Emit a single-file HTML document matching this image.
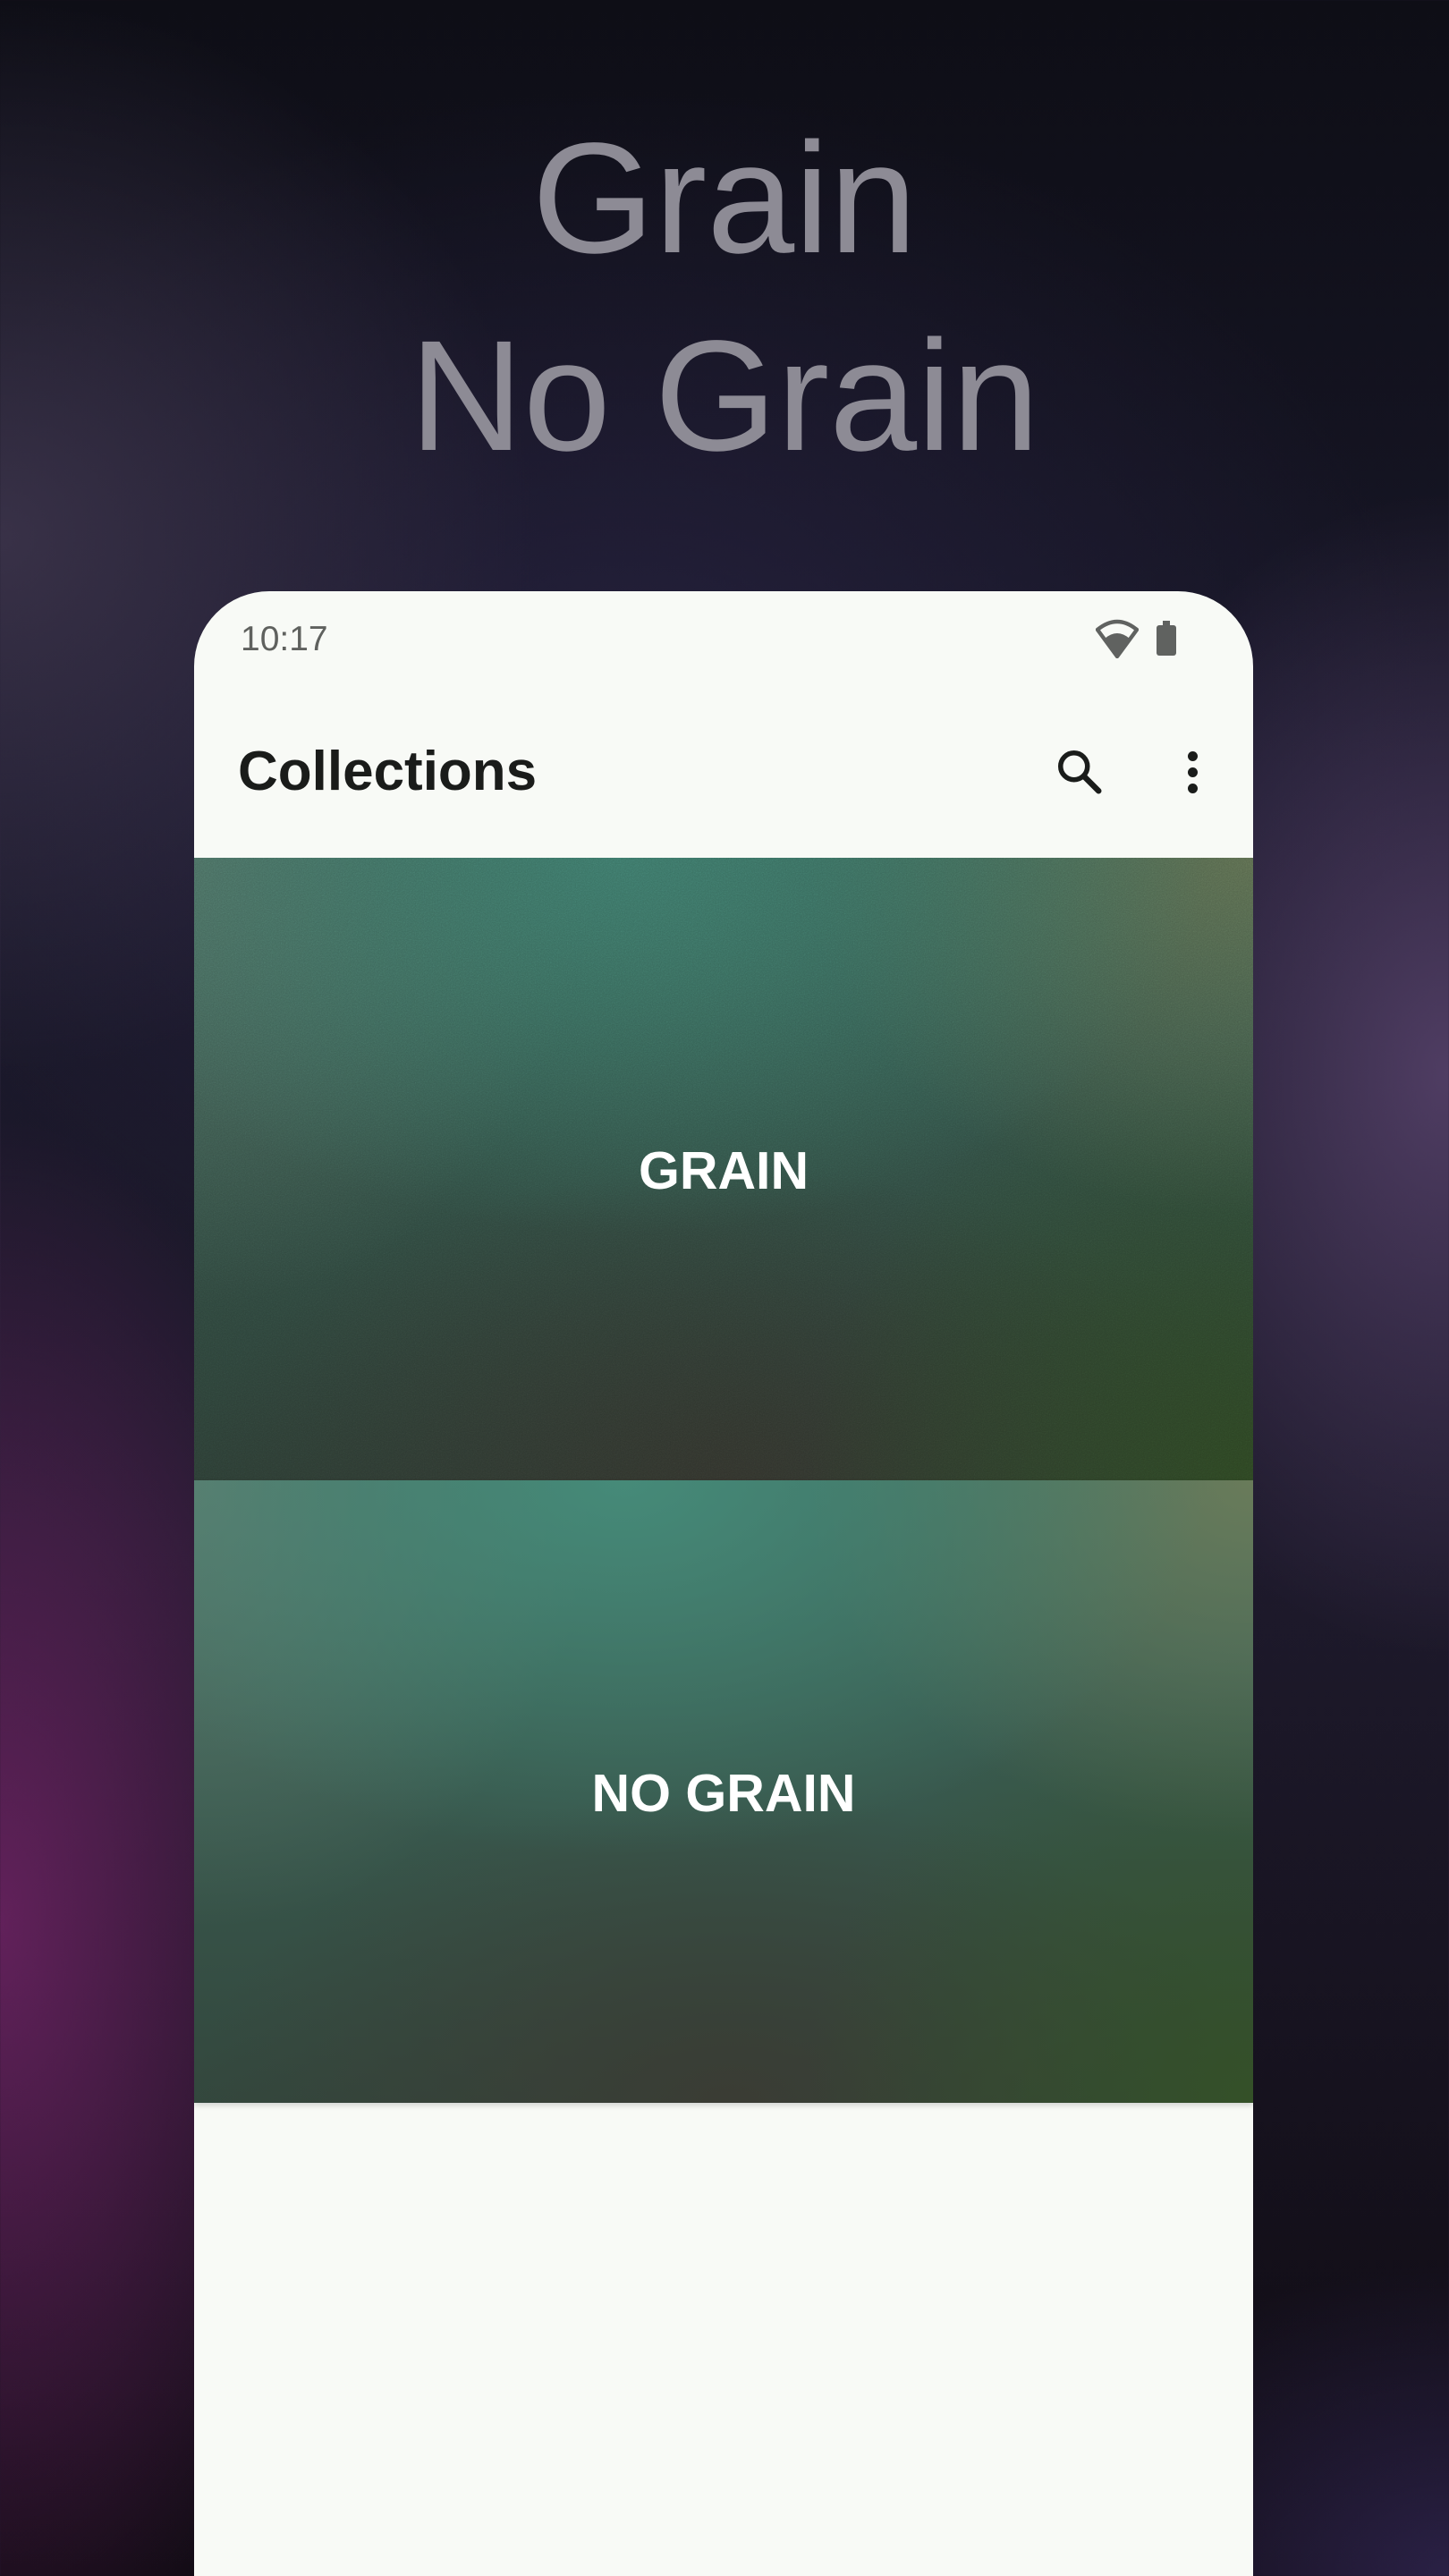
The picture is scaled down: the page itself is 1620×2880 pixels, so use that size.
<!DOCTYPE html>
<html><head><meta charset="utf-8"><style>
*{margin:0;padding:0;box-sizing:border-box}
html,body{width:1620px;height:2880px;overflow:hidden}
body{position:relative;font-family:"Liberation Sans",sans-serif;
background:
radial-gradient(ellipse 420px 900px at 0px 2150px,rgba(110,35,100,.85),rgba(110,35,100,0) 100%),
radial-gradient(ellipse 450px 650px at 1620px 1200px,rgba(85,65,105,.9),rgba(85,65,105,0) 100%),
radial-gradient(ellipse 600px 600px at 0px 600px,rgba(60,52,75,.9),rgba(60,52,75,0) 100%),
radial-gradient(ellipse 450px 350px at 1620px 2880px,rgba(45,35,75,.9),rgba(45,35,75,0) 100%),
radial-gradient(ellipse 900px 700px at 700px 800px,rgba(40,35,65,.8),rgba(40,35,65,0) 100%),
linear-gradient(180deg,#0e0e16 0%,#181728 30%,#1e1a2c 60%,#0f0b12 100%);}
.h{position:absolute;left:0;width:1620px;text-align:center;color:#8d8b95;font-size:176px;line-height:1}
.phone{position:absolute;left:217px;top:661px;width:1184px;height:2300px;background:#f8faf6;border-radius:84px 84px 0 0;overflow:hidden}
.time{position:absolute;left:52px;top:32px;font-size:39px;color:#5f615e}
.title{position:absolute;left:49px;top:166px;font-size:62px;font-weight:bold;color:#1a1c1a}
.card{position:absolute;left:0;width:1184px;height:696px;overflow:hidden}
.lbl{position:absolute;left:0;width:100%;text-align:center;color:#fff;font-weight:bold;font-size:59px;line-height:1}
.g{background:
radial-gradient(ellipse 650px 420px at 480px 0px,rgba(70,140,122,.95),rgba(70,140,122,0)),
radial-gradient(ellipse 500px 400px at 1184px 0px,rgba(110,125,90,.9),rgba(110,125,90,0)),
radial-gradient(ellipse 450px 500px at 0px 0px,rgba(95,125,112,.9),rgba(95,125,112,0)),
radial-gradient(ellipse 500px 500px at 1184px 696px,rgba(52,80,40,1),rgba(52,80,40,0)),
radial-gradient(ellipse 600px 350px at 600px 696px,rgba(58,60,52,1),rgba(58,60,52,0)),
linear-gradient(180deg,#3e6a5e,#33473d);}
</style></head><body>
<div class="h" style="top:134px">Grain</div>
<div class="h" style="top:355px">No Grain</div>
<div class="phone">
<div class="time">10:17</div>
<svg style="position:absolute;left:1008px;top:31px" width="48" height="44" viewBox="0 0 24 22"><path d="M12 21 L1 6 Q12 -3 23 6 Z" fill="none" stroke="#606260" stroke-width="2.2" stroke-linejoin="round"/><path d="M12 21 L5 11 Q12 5 19 11 Z" fill="#606260"/></svg>
<div style="position:absolute;left:1076px;top:38px;width:22px;height:34px;background:#606260;border-radius:3px"></div>
<div style="position:absolute;left:1083px;top:33px;width:8px;height:6px;background:#606260"></div>
<div class="title">Collections</div>
<svg style="position:absolute;left:960px;top:172px" width="60" height="60" viewBox="0 0 24 24"><circle cx="9.5" cy="9.5" r="6" fill="none" stroke="#1a1c1a" stroke-width="2.2"/><path d="M14 14 L20.5 20.5" stroke="#1a1c1a" stroke-width="2.6" stroke-linecap="round"/></svg>
<div style="position:absolute;left:1111px;top:179px;width:11px;height:11px;border-radius:50%;background:#1a1c1a;box-shadow:0 18px 0 #1a1c1a,0 36px 0 #1a1c1a"></div>
<div class="card" style="top:298px">
<div class="card g" style="top:0;filter:brightness(.85)">
<svg width="1184" height="696" style="position:absolute;left:0;top:0;opacity:.35;mix-blend-mode:overlay"><filter id="n"><feTurbulence type="fractalNoise" baseFrequency="0.8" numOctaves="2" stitchTiles="stitch"/><feColorMatrix type="saturate" values="0"/></filter><rect width="1184" height="696" filter="url(#n)"/></svg>
</div>
<div class="lbl" style="top:321px">GRAIN</div>
</div>
<div class="card g" style="top:994px;box-shadow:0 3px 6px rgba(0,0,0,.15)">
<div class="lbl" style="top:321px">NO GRAIN</div>
</div>
</div>
</body></html>
